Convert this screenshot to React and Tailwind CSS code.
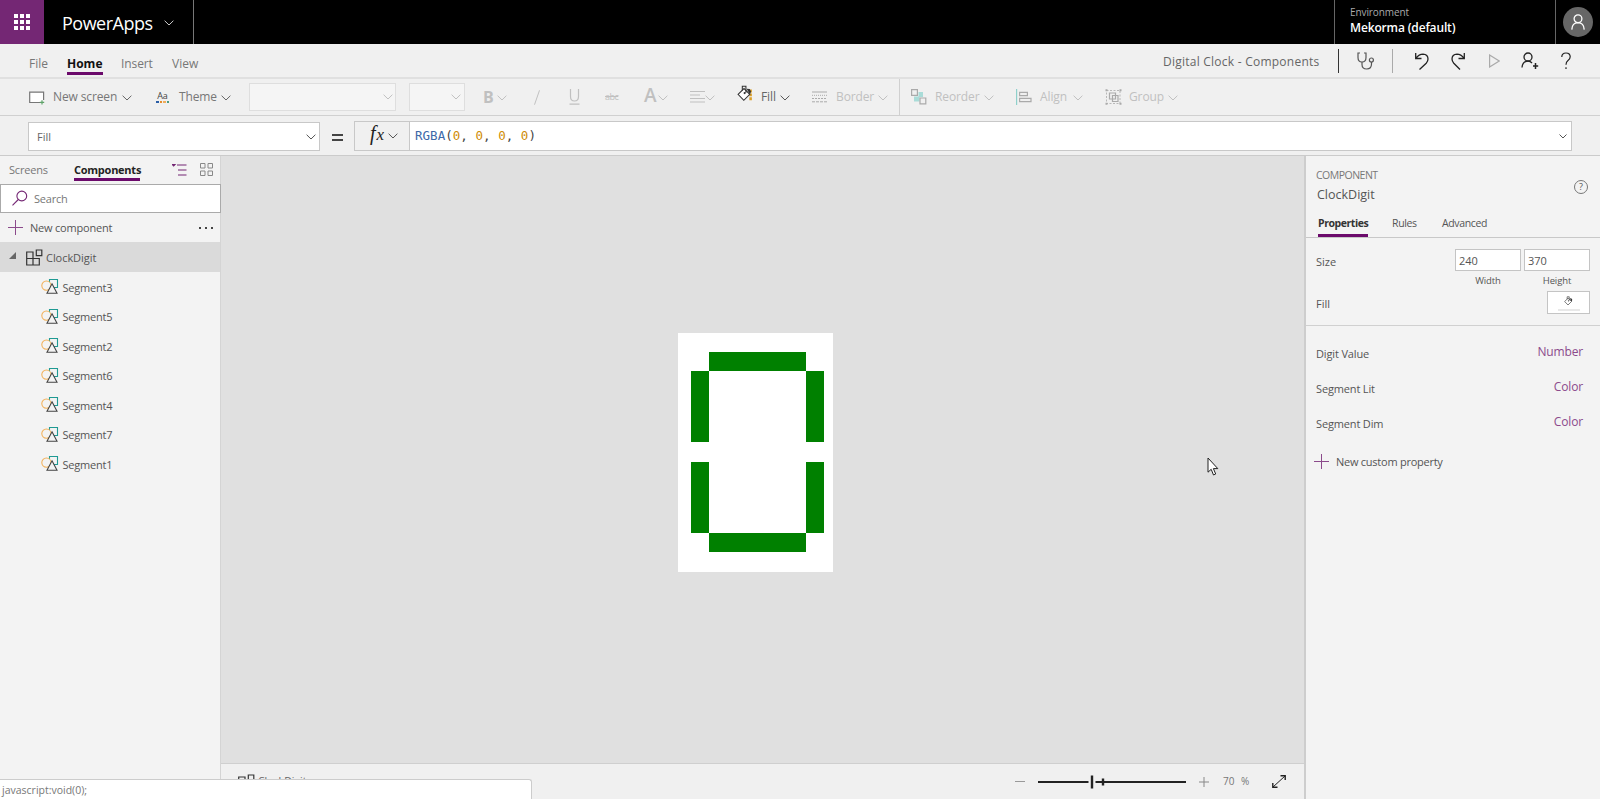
import React from "react";

const Chevron = ({ className = "" }) => (
  <svg className={"h-[6px] w-[10px] shrink-0 " + className} viewBox="0 0 10 6" fill="none" stroke="currentColor">
    <path d="M0.6 0.7 L5 5 L9.4 0.7" />
  </svg>
);

const Plus = ({ className = "" }) => (
  <svg className={"h-[15px] w-[15px] shrink-0 text-[#8b4a8b] " + className} viewBox="0 0 15 15" stroke="currentColor">
    <path d="M0 7.5H15M7.5 0V15" />
  </svg>
);

const Label = ({ className = "", children }) => (
  <span className={"block shrink-0 whitespace-nowrap " + className}>{children}</span>
);

const Bucket = ({ className = "", accent = true }) => (
  <svg className={"shrink-0 " + className} viewBox="0 0 16 16" fill="none">
    {accent && <path d="M12.8 4.2V14.6" stroke="#dba02a" strokeWidth="2.4" strokeDasharray="2.8 0.9" />}
    <path d="M1 8.8 L6.6 3.4 L12 8.8 L6.4 14.4 Z" fill="#fff" stroke="#333" />
    <path d="M5 5.2 V1.2 H8.4 V7.2" stroke="#333" />
    <circle cx="7.2" cy="7.6" r="1" fill="#333" />
    <path d="M9 3.6 L12 3.8 L13.2 6 L12.2 9 Z" fill="#333" />
  </svg>
);

const Person = ({ className }) => (
  <svg className={className} viewBox="0 0 14 16" fill="none" stroke="currentColor" strokeWidth="1.3">
    <circle cx="7" cy="4.7" r="3.9" />
    <path d="M0.8 15.6 Q1.2 8.8 7 8.7 Q12.8 8.8 13.2 15.6" />
  </svg>
);

const TopBar = () => (
  <header className="flex h-[44px] shrink-0 items-stretch bg-black text-white">
    <div className="flex w-[44px] items-center justify-center bg-[#742774]">
      <div className="grid grid-cols-3 gap-[2px]">
        {Array.from({ length: 9 }, (_, i) => (
          <span key={i} className="h-[4px] w-[4px] bg-white" />
        ))}
      </div>
    </div>
    <div className="flex w-[150px] items-center border-r border-[#777] pl-[18px] pt-[2px]">
      <Label className="w-[90px] text-[18px] tracking-[-0.5px]">PowerApps</Label>
      <Chevron className="ml-[12px] text-[#ccc]" />
    </div>
    <div className="ml-auto w-[222px] border-l border-r border-[#666] pl-[15px] pt-[4px]">
      <Label className="text-[10px] leading-[16px] tracking-[-0.1px] text-[#aaa]">Environment</Label>
      <Label className="text-[12px] leading-[16px] font-semibold tracking-[-0.15px]">Mekorma (default)</Label>
    </div>
    <div className="flex w-[44px] items-center justify-center">
      <div className="flex h-[30px] w-[30px] items-center justify-center rounded-full bg-[#666]">
        <Person className="h-[16px] w-[14px]" />
      </div>
    </div>
  </header>
);

const MenuBar = () => (
  <nav className="flex h-[35px] shrink-0 items-center border-b-2 border-[#e0e0e0] pr-[29px] pl-[29px] text-[12px] text-[#777]">
    <Label className="w-[19px] pt-[7px]">File</Label>
    <div className="ml-[19px] flex h-full w-[36px] flex-col justify-end pb-[2px]">
      <Label className="-mb-px text-[12px] font-bold leading-[18px] text-[#111]">Home</Label>
      <div className="h-[3px] bg-[#6b0a6b]" />
    </div>
    <Label className="ml-[18px] w-[32px] pt-[7px] tracking-[-0.1px]">Insert</Label>
    <Label className="ml-[19px] w-[27px] pt-[7px]">View</Label>
    <div className="ml-auto flex items-center text-[#222]">
      <Label className="w-[157px] pt-[2px] tracking-[0.24px] text-[#666]">Digital Clock - Components</Label>
      <span className="ml-[18px] h-[24px] w-px bg-[#333]" />
      <svg className="ml-[18px] h-[18px] w-[17px]" viewBox="0 0 17 18" fill="none" stroke="#555" strokeWidth="1.2">
        <path d="M3 1H1V5.5Q1 10 5 10Q9 10 9 5.5V1H7" />
        <path d="M5 10V12.5Q5 17 9.7 17Q14.5 17 14.5 12V10" />
        <circle cx="14.4" cy="8" r="2" />
      </svg>
      <span className="ml-[18px] h-[24px] w-px bg-[#aaa]" />
      <svg className="ml-[21px] h-[18px] w-[16px]" viewBox="0 0 16 18" fill="none" stroke="#222" strokeWidth="1.3">
        <path d="M1.7 1V6.5H7.5M1.9 6.3Q5 2.2 9 2.2Q14 2.4 14 7Q14 9.2 12.2 11.2L5.5 17.5" />
      </svg>
      <svg className="ml-[20px] h-[18px] w-[16px]" viewBox="0 0 16 18" fill="none" stroke="#222" strokeWidth="1.3">
        <path d="M14.3 1V6.5H8.5M14.1 6.3Q11 2.2 7 2.2Q2 2.4 2 7Q2 9.2 3.8 11.2L10 17.5" />
      </svg>
      <svg className="ml-[23px] h-[14px] w-[11px]" viewBox="0 0 11 14" fill="none" stroke="#aaa" strokeWidth="1.2">
        <path d="M0.6 1L10.2 7L0.6 13Z" />
      </svg>
      <svg className="ml-[21px] h-[17px] w-[18px]" viewBox="0 0 18 17" fill="none" stroke="#222" strokeWidth="1.3">
        <circle cx="7" cy="5" r="4" />
        <path d="M1 15.5Q1.5 9.2 7 9.1Q9.5 9.1 11 11" />
        <path d="M14.5 11V17M12 14H17.2" strokeWidth="1.5" />
      </svg>
      <svg className="ml-[22px] h-[18px] w-[10px]" viewBox="0 0 10 18" fill="none" stroke="#222" strokeWidth="1.2">
        <path d="M0.8 5Q0.8 1 5 1Q9.2 1 9.2 4.7Q9.2 6.8 7 8.4Q5 9.9 5 12.7M5 15.3V17" />
      </svg>
    </div>
  </nav>
);

const Toolbar = () => (
  <div className="flex h-[37px] shrink-0 items-center border-b border-[#d0d0d0] text-[12px] tracking-[-0.12px] text-[#c0c0c0]">
    <svg className="ml-[29px] mt-px h-[14px] w-[16px]" viewBox="0 0 16 14" fill="none">
      <path d="M11 11.5H0.7V1.2H14.6V9" fill="#fff" stroke="#777" strokeWidth="1.2" />
      <path d="M13 9.2V13.6M10.8 11.4H15.2" stroke="#5fa36a" strokeWidth="1.2" />
    </svg>
    <Label className="ml-[8px] w-[65px] text-[#777]">New screen</Label>
    <Chevron className="ml-[4px] mt-[2px] text-[#666]" />
    <div className="ml-[24px] w-[13px]">
      <div className="text-center text-[9px] leading-[9px] tracking-[-0.2px] text-[#444]">Aa</div>
      <div className="mt-px flex h-[2px] gap-px">
        <span className="flex-1 bg-[#2b5ea7]" />
        <span className="flex-1 bg-[#e58c2b]" />
        <span className="flex-1 bg-[#efad5d]" />
        <span className="flex-1 bg-[#4a9a83]" />
      </div>
    </div>
    <Label className="ml-[10px] w-[38px] text-[#777]">Theme</Label>
    <Chevron className="ml-[4px] mt-[2px] text-[#666]" />
    <div className="ml-[18px] flex h-[28px] w-[147px] items-center justify-end border border-[#dedede] bg-[#f5f5f5] pr-[2px]">
      <Chevron />
    </div>
    <div className="ml-[13px] flex h-[28px] w-[56px] items-center justify-end border border-[#dedede] bg-[#f5f5f5] pr-[3px]">
      <Chevron />
    </div>
    <Label className="ml-[18px] w-[12px] text-[16px] font-bold">B</Label>
    <Chevron className="ml-[2px] mt-[2px]" />
    <svg className="ml-[27px] h-[15px] w-[6px]" viewBox="0 0 6 15" stroke="currentColor"><path d="M5.5 0.3L0.5 14.7" /></svg>
    <svg className="ml-[29px] h-[16px] w-[11px]" viewBox="0 0 11 16" fill="none" stroke="currentColor" strokeWidth="1.2">
      <path d="M1.5 0V7.5Q1.5 12 5.5 12Q9.5 12 9.5 7.5V0M0.5 15.2H10.5" />
    </svg>
    <Label className="ml-[25px] w-[14px] text-[9px] tracking-[-0.5px] line-through">abc</Label>
    <Label className="ml-[25px] w-[12px] -mt-[3px] text-[19px] font-semibold">A</Label>
    <Chevron className="ml-[2px] mt-[2px]" />
    <svg className="ml-[22px] h-[14px] w-[15px]" viewBox="0 0 15 14" stroke="currentColor" strokeWidth="1.1">
      <path d="M0 1.5H15M0 5H10M0 8.5H15M0 12H15" />
    </svg>
    <Chevron className="mt-[2px]" />
    <Bucket className="ml-[22px] -mt-[7px] h-[17px] w-[17px]" />
    <Label className="ml-[7px] w-[16px] text-[#666]">Fill</Label>
    <Chevron className="ml-[3px] mt-[2px] text-[#555]" />
    <svg className="ml-[22px] h-[12px] w-[15px]" viewBox="0 0 15 12" stroke="#aaa">
      <path d="M0 1H15" /><path d="M0 4.3H15" strokeDasharray="1 1" /><path d="M0 7.5H15" strokeDasharray="2 1" /><path d="M0 10.8H15" strokeDasharray="3 1" />
    </svg>
    <Label className="ml-[9px] w-[37px]">Border</Label>
    <Chevron className="ml-[5px] mt-[2px]" />
    <span className="ml-[11px] h-full w-px bg-[#d0d0d0]" />
    <svg className="ml-[11px] h-[16px] w-[16px]" viewBox="0 0 16 16">
      <path d="M7.5 3H12V8H7.5ZM3 7.5H8.5V12.5H3Z" fill="#a9dcd8" />
      <path d="M0.6 0.6H6.4V6.4H0.6ZM9 9H14.8V14.8H9Z" fill="#f0f0f0" stroke="#aaa" strokeWidth="1.2" />
    </svg>
    <Label className="ml-[8px] w-[44px]">Reorder</Label>
    <Chevron className="ml-[5px] mt-[2px]" />
    <svg className="ml-[22px] h-[16px] w-[16px]" viewBox="0 0 16 16" fill="none" stroke="#aaa" strokeWidth="1.2">
      <path d="M0.6 0V16" stroke="#8fd0cb" />
      <path d="M3.6 3.4H11.4V6.6H3.6ZM3.6 9.4H15V12.6H3.6Z" />
    </svg>
    <Label className="ml-[8px] w-[28px]">Align</Label>
    <Chevron className="ml-[5px] mt-[2px]" />
    <svg className="ml-[22px] h-[16px] w-[17px]" viewBox="0 0 17 16" fill="none" stroke="#aaa">
      <path d="M1.5 1.5H15V14.5H1.5Z" strokeDasharray="2 1.5" strokeWidth="0.8" />
      <path d="M4.5 4H10.5V10H4.5ZM7.5 6.5H13V12.5H7.5Z" strokeWidth="1.2" />
      <path d="M0.5 1.3H2.5M14.5 1.3H16.5M0.5 14.7H2.5M14.5 14.7H16.5" strokeWidth="2" />
    </svg>
    <Label className="ml-[7px] w-[35px]">Group</Label>
    <Chevron className="ml-[4px] mt-[2px]" />
  </div>
);

const FormulaBar = () => (
  <div className="flex h-[40px] shrink-0 items-start border-b border-[#cbcbcb] pt-[5px]">
    <div className="ml-[28px] mt-px flex h-[29px] w-[292px] items-center border border-[#c8c8c8] bg-white pl-[8px] pr-[3px] text-[#666]">
      <Label className="pt-px text-[11px]">Fill</Label>
      <Chevron className="ml-auto text-[#555]" />
    </div>
    <div className="ml-[12px] mt-[13px] h-[7px] w-[11px] border-y-2 border-[#444]" />
    <div className="ml-[11px] flex h-[30px] w-[1218px] items-stretch border border-[#c8c8c8]">
      <div className="flex w-[55px] items-center border-r border-[#c8c8c8] pl-[15px] text-[#222]">
        <span className="-mt-[5px] w-[16px] whitespace-nowrap font-['Liberation_Serif'] text-[20px] leading-[20px] italic">
          f<span className="ml-[1px] text-[17px]">x</span>
        </span>
        <Chevron className="ml-[2px] text-[#555]" />
      </div>
      <div className="flex flex-1 items-center bg-white pr-[4px] pl-[5px]">
        <Label className="font-['DejaVu_Sans_Mono'] text-[12.5px] tracking-[0.03px] text-[#444]">
          <span className="text-[#3d68a8]">RGBA</span>(<span className="text-[#cf8c05]">0</span>, <span className="text-[#cf8c05]">0</span>, <span className="text-[#cf8c05]">0</span>, <span className="text-[#cf8c05]">0</span>)
        </Label>
        <svg className="ml-auto h-[5px] w-[8px]" viewBox="0 0 8 5" fill="none" stroke="#555"><path d="M0.5 0.5L4 4L7.5 0.5" /></svg>
      </div>
    </div>
  </div>
);

const ShapesIcon = () => (
  <svg className="h-[17px] w-[18px] shrink-0" viewBox="0 0 18 17" fill="none" strokeWidth="1.1">
    <path d="M8.5 1.5H16.5V9.5H8.5Z" stroke="#1f9a93" />
    <circle cx="5.4" cy="7.6" r="4.6" stroke="#f2b25c" fill="#f3f3f3" />
    <path d="M11 5.8L16 15.2H6Z" stroke="#444" fill="#f3f3f3" />
  </svg>
);

const ComponentIcon = () => (
  <svg className="h-[17px] w-[17px] shrink-0" viewBox="0 0 17 17" fill="none" stroke="#333" strokeWidth="1.2">
    <path d="M0.7 3H7V9.5H0.7ZM0.7 9.5H7V16H0.7ZM7 9.5H13.3V16H7ZM10.3 1H15.8V6.6H10.3Z" />
  </svg>
);

const LeftPanel = () => (
  <aside className="flex w-[221px] shrink-0 flex-col border-r border-[#d4d4d4] bg-[#f3f3f3] text-[11px] tracking-[-0.2px] text-[#555]">
    <div className="flex h-[28px] items-center pl-[9px]">
      <Label className="w-[38px] pt-px text-[#777]">Screens</Label>
      <div className="ml-[27px] flex h-full w-[66px] flex-col justify-end pb-[3px]">
        <Label className="-mb-px text-[11px] font-bold leading-[18px] tracking-[-0.25px] text-[#222]">Components</Label>
        <div className="h-[3px] bg-[#6b0a6b]" />
      </div>
      <svg className="ml-[32px] h-[12px] w-[15px]" viewBox="0 0 15 12" stroke="#742774" strokeWidth="1.1">
        <path d="M5 1H14.5M6 6H14.5M6 11H14.5" /><path d="M0.3 0.6H3L1.6 2Z" fill="#742774" />
      </svg>
      <svg className="ml-[13px] -mt-px h-[13px] w-[13px]" viewBox="0 0 13 13" fill="none" stroke="#888">
        <path d="M0.5 0.5H5V5H0.5ZM8 0.5H12.5V5H8ZM0.5 8H5V12.5H0.5ZM8 8H12.5V12.5H8Z" />
      </svg>
    </div>
    <div className="-mr-px flex h-[29px] items-center border border-[#aaa] bg-white pl-[11px]">
      <svg className="-mt-px h-[16px] w-[16px]" viewBox="0 0 16 16" fill="none" stroke="#742774" strokeWidth="1.1">
        <circle cx="9.8" cy="6" r="4.9" /><path d="M6.3 9.5L0.5 15.3" />
      </svg>
      <Label className="ml-[6px] pt-px text-[#777]">Search</Label>
    </div>
    <div className="flex h-[29px] items-center pl-[8px]">
      <Plus />
      <Label className="ml-[7px] w-[83px] pt-px">New component</Label>
      <div className="ml-[86px] flex gap-[4px]">
        <span className="h-[2px] w-[2px] bg-[#444]" /><span className="h-[2px] w-[2px] bg-[#444]" /><span className="h-[2px] w-[2px] bg-[#444]" />
      </div>
    </div>
    <div className="flex h-[30px] items-center bg-[#dadada] pl-[9px]">
      <svg className="-mt-[3px] mr-[10px] h-[7px] w-[7px]" viewBox="0 0 7 7"><path d="M0 7L7 0V7Z" fill="#666" /></svg>
      <ComponentIcon />
      <Label className="ml-[3px] pt-[2px] tracking-[-0.05px]">ClockDigit</Label>
    </div>
    {["Segment3", "Segment5", "Segment2", "Segment6", "Segment4", "Segment7", "Segment1"].map((s) => (
      <div key={s} className="flex h-[29.5px] items-center pl-[41px]">
        <ShapesIcon />
        <Label className="ml-[3.5px] pt-[2px]">{s}</Label>
      </div>
    ))}
  </aside>
);

const segments = [
  ["top", "left-[31px] top-[19px] h-[19px] w-[97px]"],
  ["upper-left", "left-[13px] top-[38px] h-[71px] w-[18px]"],
  ["upper-right", "left-[128px] top-[38px] h-[71px] w-[18px]"],
  ["lower-left", "left-[13px] top-[129px] h-[71px] w-[18px]"],
  ["lower-right", "left-[128px] top-[129px] h-[71px] w-[18px]"],
  ["bottom", "left-[31px] top-[200px] h-[19px] w-[97px]"],
];

const Canvas = () => (
  <main className="flex min-w-0 flex-1 flex-col">
    <div className="relative flex-1 bg-[#e0e0e0]">
      <div className="absolute left-[457px] top-[177px] h-[239px] w-[155px] bg-white">
        {segments.map(([name, pos]) => (
          <div key={name} className={"absolute bg-[#008000] " + pos} />
        ))}
      </div>
      <svg className="absolute left-[986px] top-[301px] h-[20px] w-[12px]" viewBox="0 0 12 20" fill="#fff" stroke="#222">
        <path d="M1 1V15.2L4.2 12.3L6.5 18L8.7 17L6.4 11.6H10.8Z" />
      </svg>
    </div>
    <div className="flex h-[36px] items-center border-t border-[#cfcfcf] bg-[#f0f0f0] pl-[17px]">
      <div className="flex items-center self-start pt-[10px]">
        <ComponentIcon />
        <Label className="-mt-[3px] ml-[3px] w-[60px] text-[10.5px] leading-[18px] text-[#666]">ClockDigit</Label>
      </div>
      <span className="ml-[697px] h-px w-[10px] bg-[#999]" />
      <svg className="ml-[13px] h-[16px] w-[148px]" viewBox="0 0 148 16">
        <path d="M0 8H148" stroke="#222" strokeWidth="2" />
        <path d="M50.5 1H57.5V15H50.5Z" fill="#f0f0f0" />
        <path d="M54 1.5V14.5M65 4.5V11.5" stroke="#222" strokeWidth="2.4" />
      </svg>
      <svg className="ml-[13px] h-[10px] w-[10px]" viewBox="0 0 10 10" stroke="#888"><path d="M0 5H10M5 0V10" /></svg>
      <Label className="ml-[14px] w-[12px] text-[10px] text-[#777]">70</Label>
      <Label className="ml-[6px] w-[10px] text-[10px] text-[#777]">%</Label>
      <svg className="ml-[21px] h-[13px] w-[14px]" viewBox="0 0 14 13" fill="none" stroke="#222">
        <path d="M1 12L13 1" /><path d="M8.5 0.8H13.2V5M0.8 8V12.2H5.5" strokeWidth="1.4" />
      </svg>
    </div>
  </main>
);

const PropertyRow = ({ name, type }) => (
  <div className="flex h-[35px] items-center justify-between pr-[17px]">
    <Label className="pt-[2px] tracking-[-0.15px]">{name}</Label>
    <Label className="-mt-[3px] text-[12px] tracking-[-0.15px] text-[#8b4a8b]">{type}</Label>
  </div>
);

const RightPanel = () => (
  <aside className="flex w-[296px] shrink-0 flex-col border-l-2 border-[#cdcdcd] bg-[#f3f3f3] text-[11px] text-[#555]">
    <div className="flex h-[52px] justify-between pl-[10px]">
      <div>
        <Label className="mt-[10px] text-[10.5px] leading-[18px] tracking-[-0.5px] text-[#777]">COMPONENT</Label>
        <Label className="ml-px mt-px text-[12.5px] leading-[20px]">ClockDigit</Label>
      </div>
      <div className="mr-[12px] mt-[24px] flex h-[14px] w-[14px] items-center justify-center rounded-full border border-[#777] text-[9px]">?</div>
    </div>
    <div className="flex h-[30px] items-stretch border-b border-[#c8c8c8] pl-[12px] text-[10.5px] tracking-[-0.35px]">
      <div className="flex w-[50px] flex-col justify-end">
        <Label className="mb-[2px] font-bold leading-[18px] tracking-[-0.45px] text-[#333]">Properties</Label>
        <div className="h-[3px] bg-[#6b0a6b]" />
      </div>
      <Label className="ml-[24px] w-[24px] pt-[6px] leading-[18px]">Rules</Label>
      <Label className="ml-[26px] pt-[6px] leading-[18px]">Advanced</Label>
    </div>
    <div className="h-[88px] border-b border-[#d0d0d0] pl-[10px] pr-[10px] pt-[11px]">
      <div className="flex justify-between">
        <Label className="pt-[5px]">Size</Label>
        <div className="flex gap-[3px] text-center text-[9.5px] tracking-[-0.1px]">
          <div className="w-[66px]">
            <div className="h-[22px] border border-[#c4c4c4] bg-white pl-[3px] text-left text-[11px] leading-[22px] text-[#555]">240</div>
            <Label className="pt-px leading-[18px]">Width</Label>
          </div>
          <div className="w-[66px]">
            <div className="h-[22px] border border-[#c4c4c4] bg-white pl-[3px] text-left text-[11px] leading-[22px] text-[#555]">370</div>
            <Label className="pt-px leading-[18px]">Height</Label>
          </div>
        </div>
      </div>
      <div className="mt-px flex justify-between">
        <Label className="pt-[5px]">Fill</Label>
        <div className="flex h-[23px] w-[43px] flex-col items-center border border-[#c4c4c4] bg-white pt-[4px]">
          <Bucket className="h-[10px] w-[10px]" accent={false} />
          <div className="mt-[3px] h-[2px] w-[22px] bg-[#e8e8e8]" />
        </div>
      </div>
    </div>
    <div className="pl-[10px] pt-[10px]">
      <PropertyRow name="Digit Value" type="Number" />
      <PropertyRow name="Segment Lit" type="Color" />
      <PropertyRow name="Segment Dim" type="Color" />
    </div>
    <div className="mt-[6px] flex h-[28px] items-center pl-[8px]">
      <Plus />
      <Label className="ml-[7px] pt-[2px] tracking-[-0.25px]">New custom property</Label>
    </div>
  </aside>
);

export default function App() {
  return (
    <div className="relative flex h-[799px] w-[1600px] flex-col overflow-hidden bg-[#f0f0f0] font-['Open_Sans','Noto_Sans',sans-serif]">
      <TopBar />
      <MenuBar />
      <Toolbar />
      <FormulaBar />
      <div className="flex min-h-0 flex-1">
        <LeftPanel />
        <Canvas />
        <RightPanel />
      </div>
      <div className="absolute bottom-0 left-0 h-[20px] w-[532px] rounded-tr-[3px] border-t border-r border-[#ccc] bg-white pl-[2px] text-[10.5px] leading-[20px] text-[#777]">
        javascript:void(0);
      </div>
    </div>
  );
}
